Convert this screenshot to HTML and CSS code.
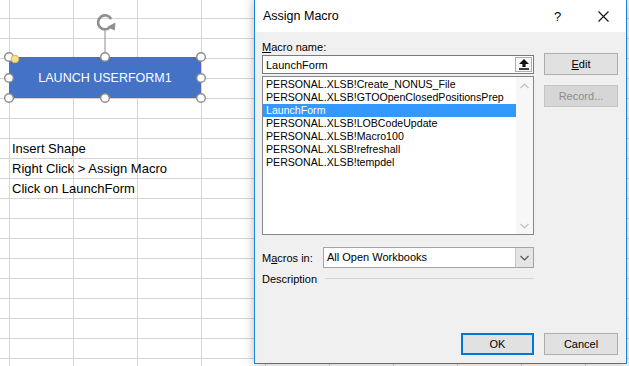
FILE: index.html
```html
<!DOCTYPE html>
<html>
<head>
<meta charset="utf-8">
<link rel="stylesheet" href="styles.css">
</head>
<body>
<div class="sheet">
  <div class="cells">
    <div class="cell">Insert Shape</div>
    <div class="cell">Right Click &gt; Assign Macro</div>
    <div class="cell">Click on LaunchForm</div>
  </div>

  <div class="shape">LAUNCH USERFORM1</div>
  <svg class="handles" width="212" height="108" viewBox="0 0 212 108">
    <line x1="105" y1="31" x2="105" y2="53" stroke="#8c8c8c" stroke-width="1"/>
    <path d="M111.2 19 A7 7 0 1 0 110 27.4" fill="none" stroke="#8f8f8f" stroke-width="2.6"/>
    <path d="M107 27 L115.5 22.5 L114.8 30.5 Z" fill="#8f8f8f"/>
    <g fill="#fff" stroke="#8d8d8d" stroke-width="1.4">
      <circle cx="9" cy="57" r="4.3"/>
      <circle cx="105" cy="57" r="4.3"/>
      <circle cx="201" cy="57" r="4.3"/>
      <circle cx="9" cy="78" r="4.3"/>
      <circle cx="201" cy="78" r="4.3"/>
      <circle cx="9" cy="98" r="4.3"/>
      <circle cx="105" cy="98" r="4.3"/>
      <circle cx="201" cy="98" r="4.3"/>
    </g>
    <circle cx="15" cy="59" r="3.8" fill="#fbe27c" stroke="#c9b86a" stroke-width="1"/>
  </svg>

  <div class="dialog">
    <div class="titlebar">
      <span class="title">Assign Macro</span>
      <span class="tb-btn help">?</span>
      <span class="tb-btn close">
        <svg width="11" height="11" viewBox="0 0 11 11"><path d="M0.5 0.5 L10.5 10.5 M10.5 0.5 L0.5 10.5" stroke="#111" stroke-width="1.1"/></svg>
      </span>
    </div>
    <div class="dlg-body">
      <div class="top">
        <div class="main">
          <div class="label"><u>M</u>acro name:</div>
          <div class="textbox">
            <span class="tb-text">LaunchForm</span>
            <span class="up-btn">
              <svg width="10" height="11" viewBox="0 0 10 11"><path d="M5 0 L10 5 L6.6 5 L6.6 8 L3.4 8 L3.4 5 L0 5 Z" fill="#111"/><rect x="0" y="9.2" width="10" height="1.6" fill="#111"/></svg>
            </span>
          </div>
          <div class="list">
            <div class="items">
              <div class="item">PERSONAL.XLSB!Create_NONUS_File</div>
              <div class="item">PERSONAL.XLSB!GTOOpenClosedPositionsPrep</div>
              <div class="item selected">LaunchForm</div>
              <div class="item">PERSONAL.XLSB!LOBCodeUpdate</div>
              <div class="item">PERSONAL.XLSB!Macro100</div>
              <div class="item">PERSONAL.XLSB!refreshall</div>
              <div class="item">PERSONAL.XLSB!tempdel</div>
            </div>
            <div class="scrollbar">
              <svg width="9" height="6" viewBox="0 0 9 6"><path d="M0.5 5 L4.5 1 L8.5 5" fill="none" stroke="#c2c2c2" stroke-width="1.2"/></svg>
              <svg width="9" height="6" viewBox="0 0 9 6"><path d="M0.5 1 L4.5 5 L8.5 1" fill="none" stroke="#c2c2c2" stroke-width="1.2"/></svg>
            </div>
          </div>
          <div class="macros-row">
            <span class="row-label">M<u>a</u>cros in:</span>
            <div class="select">
              <span class="sel-text">All Open Workbooks</span>
              <span class="sel-btn">
                <svg width="9" height="6" viewBox="0 0 9 6"><path d="M0.5 1 L4.5 5 L8.5 1" fill="none" stroke="#555" stroke-width="1.2"/></svg>
              </span>
            </div>
          </div>
          <div class="desc-row">
            <span class="desc-label">Description</span>
            <span class="desc-line"></span>
          </div>
        </div>
        <div class="side">
          <div class="btn"><u>E</u>dit</div>
          <div class="btn disabled">Record...</div>
        </div>
      </div>
      <div class="footer">
        <div class="btn ok">OK</div>
        <div class="btn cancel">Cancel</div>
      </div>
    </div>
  </div>
</div>
</body>
</html>
```

FILE: styles.css
```css
html, body {
  margin: 0;
  padding: 0;
  background: #fff;
}

.sheet {
  position: relative;
  width: 629px;
  height: 366px;
  overflow: hidden;
  background-color: #fff;
  background-image:
    linear-gradient(to right, #d4d4d4 1px, transparent 1px),
    linear-gradient(to bottom, #d4d4d4 1px, transparent 1px);
  background-size: 64px 20px;
  background-position: 9px 18px;
  font-family: "Liberation Sans", Arial, sans-serif;
}

.cells {
  padding-top: 139px;
  padding-left: 12px;
}

.cell {
  height: 20px;
  line-height: 20px;
  font-size: 13px;
  color: #000;
}

.shape {
  position: absolute;
  left: 9px;
  top: 57px;
  width: 192px;
  height: 41px;
  box-sizing: border-box;
  background: #4472c4;
  border: 1px dotted #6b6b6b;
  color: #fff;
  font-size: 12.5px;
  display: flex;
  align-items: center;
  justify-content: center;
}

.handles {
  position: absolute;
  left: 0;
  top: 0;
}

.dialog {
  position: absolute;
  left: 254px;
  top: -1px;
  width: 373px;
  height: 365px;
  box-sizing: border-box;
  border: 1px solid #1883d7;
  background: #f0f0f0;
  box-shadow: 0 0 10px rgba(0, 0, 0, 0.28);
  display: flex;
  flex-direction: column;
  color: #000;
}

.titlebar {
  height: 32px;
  background: #fff;
  display: flex;
  align-items: center;
  flex-shrink: 0;
}

.title {
  font-size: 12.5px;
  padding-left: 8px;
  flex: 1;
}

.tb-btn {
  height: 32px;
  display: flex;
  align-items: center;
  justify-content: center;
}

.help {
  width: 45px;
  font-size: 13px;
}

.close {
  width: 46px;
}

.dlg-body {
  flex: 1;
  display: flex;
  flex-direction: column;
  padding: 7px 8px 8px 7px;
  font-size: 11px;
}

.top {
  display: flex;
  gap: 10px;
}

.main {
  width: 272px;
}

.label {
  height: 16px;
  line-height: 16px;
}

.textbox {
  height: 19px;
  box-sizing: border-box;
  border: 1px solid #7a7a7a;
  background: #fff;
  display: flex;
  align-items: center;
}

.tb-text {
  flex: 1;
  padding-left: 3px;
  padding-top: 1px;
}

.up-btn {
  width: 17px;
  height: 15px;
  box-sizing: border-box;
  margin-right: 1px;
  border: 1px solid #adadad;
  background: #f6f6f6;
  display: flex;
  align-items: center;
  justify-content: center;
}

.list {
  margin-top: 2px;
  height: 159px;
  box-sizing: border-box;
  border: 1px solid #828790;
  background: #fff;
  display: flex;
}

.items {
  flex: 1;
  padding-top: 1px;
}

.item {
  height: 13px;
  line-height: 13px;
  padding-left: 3px;
  font-size: 10.6px;
  white-space: nowrap;
}

.item.selected {
  background: #3399ff;
  color: #fff;
}

.scrollbar {
  width: 17px;
  background: #f7f7f7;
  display: flex;
  flex-direction: column;
  align-items: center;
  justify-content: space-between;
  padding: 6px 0 5px;
}

.macros-row {
  margin-top: 12px;
  display: flex;
  align-items: center;
}

.row-label {
  width: 61px;
}

.select {
  flex: 1;
  height: 21px;
  box-sizing: border-box;
  border: 1px solid #a4a4a4;
  background: #fff;
  display: flex;
}

.sel-text {
  flex: 1;
  padding-left: 3px;
  line-height: 19px;
}

.sel-btn {
  width: 17px;
  background: #e5e5e5;
  border-left: 1px solid #c8c8c8;
  display: flex;
  align-items: center;
  justify-content: center;
}

.desc-row {
  margin-top: 3px;
  height: 16px;
  display: flex;
  align-items: center;
}

.desc-label {
  width: 63px;
}

.desc-line {
  flex: 1;
  height: 1px;
  background: #d6d6d6;
  margin-top: -1px;
}

.side {
  width: 74px;
  padding-top: 14px;
  display: flex;
  flex-direction: column;
  gap: 10px;
}

.btn {
  height: 22px;
  box-sizing: border-box;
  border: 1px solid #adadad;
  background: #e1e1e1;
  display: flex;
  align-items: center;
  justify-content: center;
  font-size: 11px;
}

.btn.disabled {
  background: #d6d6d6;
  border-color: #c4c4c4;
  color: #8c8c8c;
}

.footer {
  margin-top: auto;
  display: flex;
  justify-content: flex-end;
  gap: 10px;
}

.ok {
  width: 73px;
  border: 2px solid #0078d7;
}

.cancel {
  width: 74px;
}
```
